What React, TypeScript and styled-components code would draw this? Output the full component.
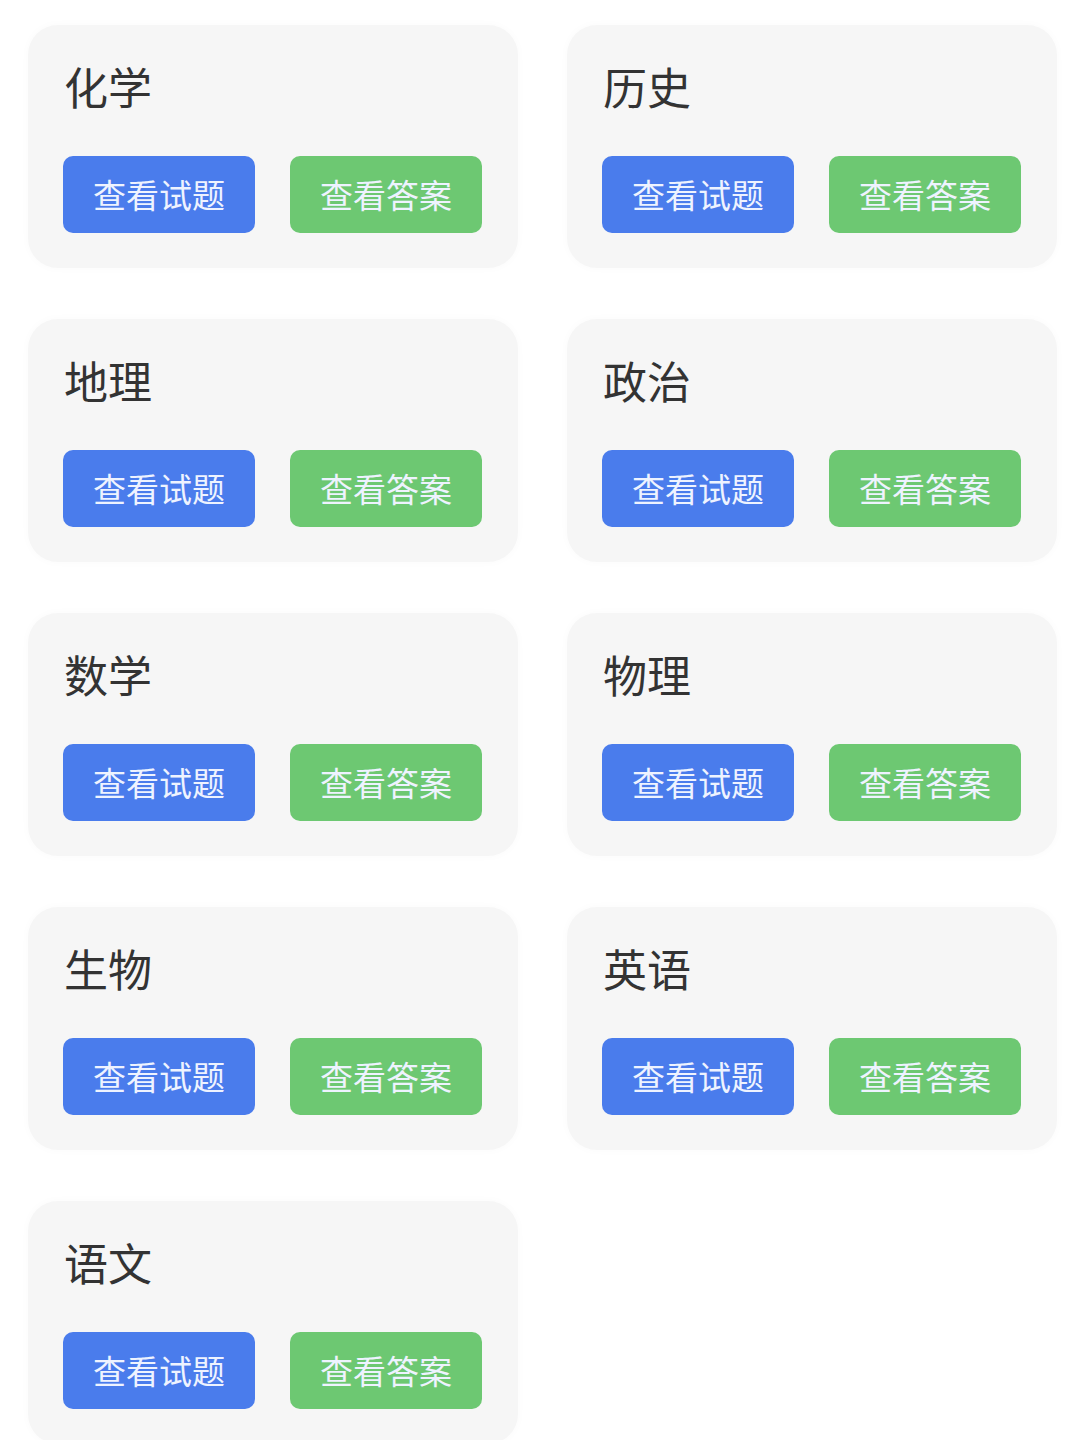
import styled, { createGlobalStyle } from 'styled-components'

const subjects = ['化学', '历史', '地理', '政治', '数学', '物理', '生物', '英语', '语文']

const GlobalStyle = createGlobalStyle`
  body {
    margin: 0;
    background: #ffffff;
    font-family: "Noto Sans CJK SC", "Noto Sans", sans-serif;
  }
`

export default function App() {
  return (
    <>
      <GlobalStyle />
      <Grid>
        {subjects.map((name) => (
          <Card key={name}>
            <Title>{name}</Title>
            <Actions>
              <ActionButton $variant="blue">查看试题</ActionButton>
              <ActionButton $variant="green">查看答案</ActionButton>
            </Actions>
          </Card>
        ))}
      </Grid>
    </>
  )
}

const Grid = styled.div`
  display: grid;
  grid-template-columns: 490px 490px;
  column-gap: 49px;
  row-gap: 51px;
  padding: 25px 0 0 28px;
  height: 1440px;
  box-sizing: border-box;
  overflow: hidden;
`

const Card = styled.div`
  display: flex;
  flex-direction: column;
  height: 243px;
  box-sizing: border-box;
  padding: 39px 35px 35px;
  background: #f6f6f6;
  border-radius: 30px;
  box-shadow: 0 0 10px rgba(0, 0, 0, 0.025);
`

const Title = styled.div`
  font-size: 44px;
  line-height: 44px;
  color: #333333;
  padding-left: 1px;
`

const Actions = styled.div`
  display: flex;
  gap: 35px;
  margin-top: 48px;
`

const ActionButton = styled.button<{ $variant: 'blue' | 'green' }>`
  width: 192px;
  height: 77px;
  border: none;
  border-radius: 10px;
  background: ${(p) => (p.$variant === 'blue' ? '#4a7cec' : '#6dc872')};
  color: #eef3ff;
  font-family: "Noto Sans CJK SC", "Noto Sans", sans-serif;
  font-size: 33px;
  line-height: 1;
  padding: 0;
  display: flex;
  align-items: center;
  justify-content: center;
  cursor: pointer;
`
